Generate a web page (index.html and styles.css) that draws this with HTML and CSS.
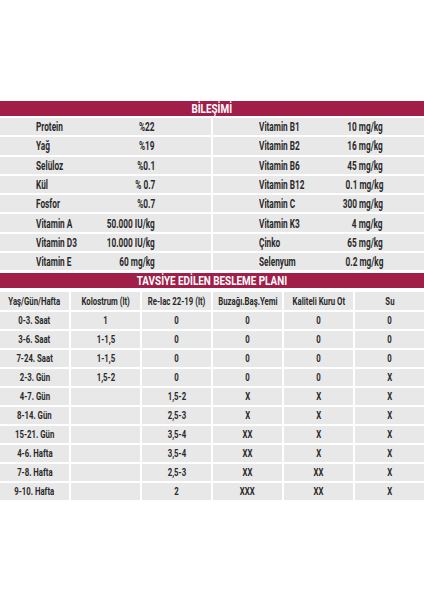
FILE: index.html
```html
<!DOCTYPE html>
<html lang="tr">
<head>
<meta charset="utf-8">
<link rel="stylesheet" href="styles.css">
</head>
<body>
<div class="sheet">
  <div class="band band-top"><span class="t">BİLEŞİMİ</span></div>
  <div class="comp">
    <div class="cc l"><span class="t lbl">Protein</span><span class="t val">%22</span></div>
    <div class="cc r"><span class="t lbl">Vitamin B1</span><span class="t val">10 mg/kg</span></div>
    <div class="cc l"><span class="t lbl">Yağ</span><span class="t val">%19</span></div>
    <div class="cc r"><span class="t lbl">Vitamin B2</span><span class="t val">16 mg/kg</span></div>
    <div class="cc l"><span class="t lbl">Selüloz</span><span class="t val">%0.1</span></div>
    <div class="cc r"><span class="t lbl">Vitamin B6</span><span class="t val">45 mg/kg</span></div>
    <div class="cc l"><span class="t lbl">Kül</span><span class="t val">% 0.7</span></div>
    <div class="cc r"><span class="t lbl">Vitamin B12</span><span class="t val">0.1 mg/kg</span></div>
    <div class="cc l"><span class="t lbl">Fosfor</span><span class="t val">%0.7</span></div>
    <div class="cc r"><span class="t lbl">Vitamin C</span><span class="t val">300 mg/kg</span></div>
    <div class="cc l"><span class="t lbl">Vitamin A</span><span class="t val">50.000 IU/kg</span></div>
    <div class="cc r"><span class="t lbl">Vitamin K3</span><span class="t val">4 mg/kg</span></div>
    <div class="cc l"><span class="t lbl">Vitamin D3</span><span class="t val">10.000 IU/kg</span></div>
    <div class="cc r"><span class="t lbl">Çinko</span><span class="t val">65 mg/kg</span></div>
    <div class="cc l"><span class="t lbl">Vitamin E</span><span class="t val">60 mg/kg</span></div>
    <div class="cc r"><span class="t lbl">Selenyum</span><span class="t val">0.2 mg/kg</span></div>
  </div>
  <div class="band band-plan"><span class="t">TAVSİYE EDİLEN BESLEME PLANI</span></div>
  <div class="plan">
    <div class="pc head"><span class="t">Yaş/Gün/Hafta</span></div>
    <div class="pc head"><span class="t">Kolostrum (lt)</span></div>
    <div class="pc head"><span class="t">Re-lac 22-19 (lt)</span></div>
    <div class="pc head"><span class="t">Buzağı.Baş.Yemi</span></div>
    <div class="pc head"><span class="t">Kaliteli Kuru Ot</span></div>
    <div class="pc head"><span class="t">Su</span></div>

    <div class="pc"><span class="t">0-3. Saat</span></div>
    <div class="pc"><span class="t">1</span></div>
    <div class="pc"><span class="t">0</span></div>
    <div class="pc"><span class="t">0</span></div>
    <div class="pc"><span class="t">0</span></div>
    <div class="pc"><span class="t">0</span></div>

    <div class="pc"><span class="t">3-6. Saat</span></div>
    <div class="pc"><span class="t">1-1,5</span></div>
    <div class="pc"><span class="t">0</span></div>
    <div class="pc"><span class="t">0</span></div>
    <div class="pc"><span class="t">0</span></div>
    <div class="pc"><span class="t">0</span></div>

    <div class="pc"><span class="t">7-24. Saat</span></div>
    <div class="pc"><span class="t">1-1,5</span></div>
    <div class="pc"><span class="t">0</span></div>
    <div class="pc"><span class="t">0</span></div>
    <div class="pc"><span class="t">0</span></div>
    <div class="pc"><span class="t">0</span></div>

    <div class="pc"><span class="t">2-3. Gün</span></div>
    <div class="pc"><span class="t">1,5-2</span></div>
    <div class="pc"><span class="t">0</span></div>
    <div class="pc"><span class="t">0</span></div>
    <div class="pc"><span class="t">0</span></div>
    <div class="pc"><span class="t">X</span></div>

    <div class="pc"><span class="t">4-7. Gün</span></div>
    <div class="pc"></div>
    <div class="pc"><span class="t">1,5-2</span></div>
    <div class="pc"><span class="t">X</span></div>
    <div class="pc"><span class="t">X</span></div>
    <div class="pc"><span class="t">X</span></div>

    <div class="pc"><span class="t">8-14. Gün</span></div>
    <div class="pc"></div>
    <div class="pc"><span class="t">2,5-3</span></div>
    <div class="pc"><span class="t">X</span></div>
    <div class="pc"><span class="t">X</span></div>
    <div class="pc"><span class="t">X</span></div>

    <div class="pc"><span class="t">15-21. Gün</span></div>
    <div class="pc"></div>
    <div class="pc"><span class="t">3,5-4</span></div>
    <div class="pc"><span class="t">XX</span></div>
    <div class="pc"><span class="t">X</span></div>
    <div class="pc"><span class="t">X</span></div>

    <div class="pc"><span class="t">4-6. Hafta</span></div>
    <div class="pc"></div>
    <div class="pc"><span class="t">3,5-4</span></div>
    <div class="pc"><span class="t">XX</span></div>
    <div class="pc"><span class="t">X</span></div>
    <div class="pc"><span class="t">X</span></div>

    <div class="pc"><span class="t">7-8. Hafta</span></div>
    <div class="pc"></div>
    <div class="pc"><span class="t">2,5-3</span></div>
    <div class="pc"><span class="t">XX</span></div>
    <div class="pc"><span class="t">XX</span></div>
    <div class="pc"><span class="t">X</span></div>

    <div class="pc"><span class="t">9-10. Hafta</span></div>
    <div class="pc"></div>
    <div class="pc"><span class="t">2</span></div>
    <div class="pc"><span class="t">XXX</span></div>
    <div class="pc"><span class="t">XX</span></div>
    <div class="pc"><span class="t">X</span></div>
  </div>
</div>
</body>
</html>
```
FILE: styles.css
```css
html, body {
  margin: 0;
  padding: 0;
  background: #ffffff;
}

body {
  width: 424px;
  height: 600px;
  overflow: hidden;
  font-family: Roboto, "Liberation Sans", sans-serif;
  font-weight: 700;
  color: #2a2a2a;
}

.sheet {
  padding-top: 101px;
  display: flex;
  flex-direction: column;
}

.t {
  display: inline-block;
  white-space: nowrap;
  transform: scaleX(0.66);
  transform-origin: center center;
}

.band {
  height: 15px;
  background: #a01e48;
  color: #ffffff;
  display: flex;
  align-items: center;
  justify-content: center;
  font-size: 13px;
  line-height: 15px;
}

.band .t {
  transform: scaleX(0.76);
}

.comp {
  margin-top: 2px;
  display: grid;
  grid-template-columns: 211px 211px;
  column-gap: 2px;
  row-gap: 2px;
  grid-auto-rows: 17.3px;
}

.cc {
  background: #e8e8e8;
  display: flex;
  align-items: center;
  font-size: 12.5px;
  line-height: 17px;
}

.cc.l {
  padding: 0 56px 0 36px;
}

.cc.r {
  padding: 0 41px 0 46px;
}

.cc .lbl {
  flex: 1 1 0;
  min-width: 0;
  transform-origin: left center;
}

.cc .val {
  flex: 0 0 auto;
  transform-origin: right center;
}

.band-plan {
  margin-top: 3px;
}

.plan {
  margin-top: 3.5px;
  display: grid;
  grid-template-columns: repeat(6, 69px);
  column-gap: 2px;
  row-gap: 2px;
  grid-template-rows: 18.3px;
  grid-auto-rows: 17px;
}

.pc {
  background: #e8e8e8;
  display: flex;
  align-items: center;
  justify-content: center;
  font-size: 11.8px;
  line-height: 17px;
}
```
